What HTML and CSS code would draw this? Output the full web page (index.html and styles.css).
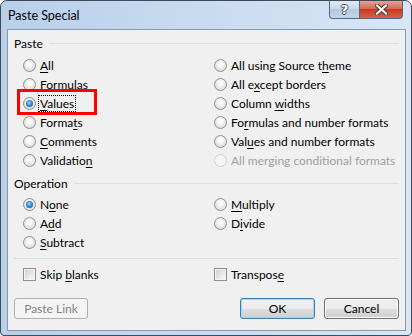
FILE: index.html
```html
<!DOCTYPE html>
<html lang="en">
<head>
    <meta charset="UTF-8">
    <meta name="viewport" content="width=device-width, initial-scale=1.0">
    <title>Paste Special</title>
    <link rel="stylesheet" href="styles.css">
</head>
<body>
    <div class="window">
        <div class="titlebar">
            <span class="title">Paste Special</span>
            <div class="caption-buttons">
                <span class="cap-btn help">?</span>
                <span class="cap-btn close">
                    <svg width="13" height="11" viewBox="0 0 13 11">
                        <path d="M2 1.5 L11 9.5 M11 1.5 L2 9.5" stroke="#3b3b3b" stroke-width="4" stroke-linecap="square" fill="none"/>
                        <path d="M2 1.5 L11 9.5 M11 1.5 L2 9.5" stroke="#fff" stroke-width="2.2" stroke-linecap="square" fill="none"/>
                    </svg>
                </span>
            </div>
        </div>

        <div class="client">
            <div class="group-title">Paste</div>
            <div class="options six">
                <label class="opt"><span class="radio"></span><span><u>A</u>ll</span></label>
                <label class="opt"><span class="radio"></span><span>Formulas</span></label>
                <label class="opt marked"><span class="radio on"></span><span class="focus"><u>V</u>alues</span></label>
                <label class="opt"><span class="radio"></span><span>Forma<u>t</u>s</span></label>
                <label class="opt"><span class="radio"></span><span><u>C</u>omments</span></label>
                <label class="opt"><span class="radio"></span><span>Validatio<u>n</u></span></label>
                <label class="opt"><span class="radio"></span><span>All using Source t<u>h</u>eme</span></label>
                <label class="opt"><span class="radio"></span><span>All e<u>x</u>cept borders</span></label>
                <label class="opt"><span class="radio"></span><span>Column <u>w</u>idths</span></label>
                <label class="opt"><span class="radio"></span><span>Fo<u>r</u>mulas and number formats</span></label>
                <label class="opt"><span class="radio"></span><span>Val<u>u</u>es and number formats</span></label>
                <label class="opt disabled"><span class="radio"></span><span>All merging conditional formats</span></label>
            </div>

            <div class="group-title">Operation</div>
            <div class="options three">
                <label class="opt"><span class="radio on"></span><span>N<u>o</u>ne</span></label>
                <label class="opt"><span class="radio"></span><span>A<u>d</u>d</span></label>
                <label class="opt"><span class="radio"></span><span><u>S</u>ubtract</span></label>
                <label class="opt"><span class="radio"></span><span><u>M</u>ultiply</span></label>
                <label class="opt"><span class="radio"></span><span>D<u>i</u>vide</span></label>
            </div>

            <div class="separator"></div>
            <div class="options one">
                <label class="opt"><span class="check"></span><span>Skip <u>b</u>lanks</span></label>
                <label class="opt"><span class="check"></span><span>Transpos<u>e</u></span></label>
            </div>

            <div class="buttons">
                <button class="btn" disabled>Paste Link</button>
                <span class="spacer"></span>
                <button class="btn default">OK</button>
                <button class="btn">Cancel</button>
            </div>
        </div>
    </div>
</body>
</html>
```

FILE: styles.css
```css
html, body {
    margin: 0;
    padding: 0;
    background: #fff;
}
body {
    font-family: Lato, "Noto Sans", sans-serif;
    font-size: 12px;
    color: #000;
}
.window {
    box-sizing: border-box;
    width: 412px;
    height: 336px;
    border: 1px solid #3f4a59;
    border-radius: 7px 7px 4px 4px;
    background: linear-gradient(to right, #b9d0ea, #d8e6f6);
    display: flex;
    flex-direction: column;
    overflow: hidden;
}
.titlebar {
    flex: none;
    height: 28px;
    display: flex;
    align-items: flex-start;
    padding-left: 7px;
}
.title {
    line-height: 29px;
    font-size: 12.5px;
}
.caption-buttons {
    margin-left: auto;
    margin-right: 8px;
    margin-top: -1px;
    display: flex;
}
.cap-btn {
    box-sizing: border-box;
    height: 19px;
    border: 1px solid #56677d;
    border-top: none;
    display: flex;
    align-items: center;
    justify-content: center;
}
.help {
    width: 30px;
    border-right: none;
    border-radius: 0 0 0 4px;
    background: linear-gradient(#e3ecf6, #c9d8ea 50%, #b5c8df 51%, #c4d6ea);
    color: #fff;
    font-family: "DejaVu Sans", sans-serif;
    font-weight: bold;
    font-size: 13px;
    text-shadow: 1px 0 0 #4a4f57, -1px 0 0 #4a4f57, 0 1px 0 #4a4f57, 0 -1px 0 #4a4f57;
}
.close {
    width: 44px;
    border-radius: 0 0 4px 0;
    background: linear-gradient(#e9a99b, #d9685a 48%, #c7391f 52%, #d8614a);
}
.client {
    flex: 1;
    margin: 0 5px 4px 6px;
    border: 1px solid #8699b2;
    background: #f0f0f0;
    padding: 5px 6px 0;
}
.group-title {
    height: 16px;
    display: flex;
    align-items: center;
    gap: 6px;
}
.group-title::after {
    content: "";
    flex: 1;
    height: 1px;
    background: #d5dfe5;
}
.options {
    display: grid;
    grid-template-columns: 191px 1fr;
    grid-auto-flow: column;
    padding-left: 9px;
}
.six {
    grid-template-rows: repeat(6, 19px);
    margin: 5px 0;
}
.three {
    grid-template-rows: repeat(3, 19px);
    margin-top: 4px;
}
.one {
    grid-template-rows: 19px;
}
.opt {
    display: flex;
    align-items: center;
    gap: 4px;
    white-space: nowrap;
}
.opt u {
    text-underline-offset: 2px;
}
.radio {
    box-sizing: border-box;
    width: 13px;
    height: 13px;
    border-radius: 50%;
    border: 1px solid #8f9196;
    background: radial-gradient(circle at 50% 40%, #fbfbfb 20%, #e4e4e4 60%, #cfd0d2);
    display: flex;
    align-items: center;
    justify-content: center;
    flex: none;
}
.radio.on::after {
    content: "";
    width: 7px;
    height: 7px;
    border-radius: 50%;
    background: radial-gradient(circle at 45% 40%, #9fd6f8, #3a8ccf 45%, #123f75);
}
.disabled {
    color: #a0a0a0;
}
.disabled .radio {
    border-color: #cfd0d1;
    background: #f4f4f4;
}
.focus {
    outline: 1px dotted #000;
    outline-offset: 0;
    padding: 0 1px;
    margin-left: -1px;
    line-height: 15px;
}
.marked {
    position: relative;
}
.marked::before {
    content: "";
    position: absolute;
    left: -6px;
    top: -5px;
    width: 80px;
    height: 26px;
    box-sizing: border-box;
    border: 3px solid #f00;
}
.separator {
    height: 1px;
    background: #d5dfe5;
    margin-top: 6px;
    margin-bottom: 6px;
}
.check {
    box-sizing: border-box;
    width: 13px;
    height: 13px;
    border: 1px solid #8f8f8f;
    box-shadow: inset 0 0 0 1px #f3f3f3;
    background: linear-gradient(135deg, #c9ccd2, #eeeeef 70%, #f8f8f8);
    flex: none;
}
.buttons {
    display: flex;
    gap: 9px;
    margin-top: 14px;
}
.spacer {
    flex: 1;
}
.btn {
    width: 75px;
    height: 21px;
    padding: 0;
    font: inherit;
    color: #000;
    border: 1px solid #707070;
    border-radius: 3px;
    background: linear-gradient(#f2f2f2, #ebebeb 50%, #dddddd 51%, #cfcfcf);
    box-shadow: inset 0 0 0 1px #fcfcfc;
}
.btn:disabled {
    width: 74px;
    color: #838383;
    border-color: #adb2b5;
    background: #f4f4f4;
    box-shadow: none;
}
.btn.default {
    border-color: #3c7fb1;
    box-shadow: inset 0 0 0 1px #9ed8f7;
}
```
